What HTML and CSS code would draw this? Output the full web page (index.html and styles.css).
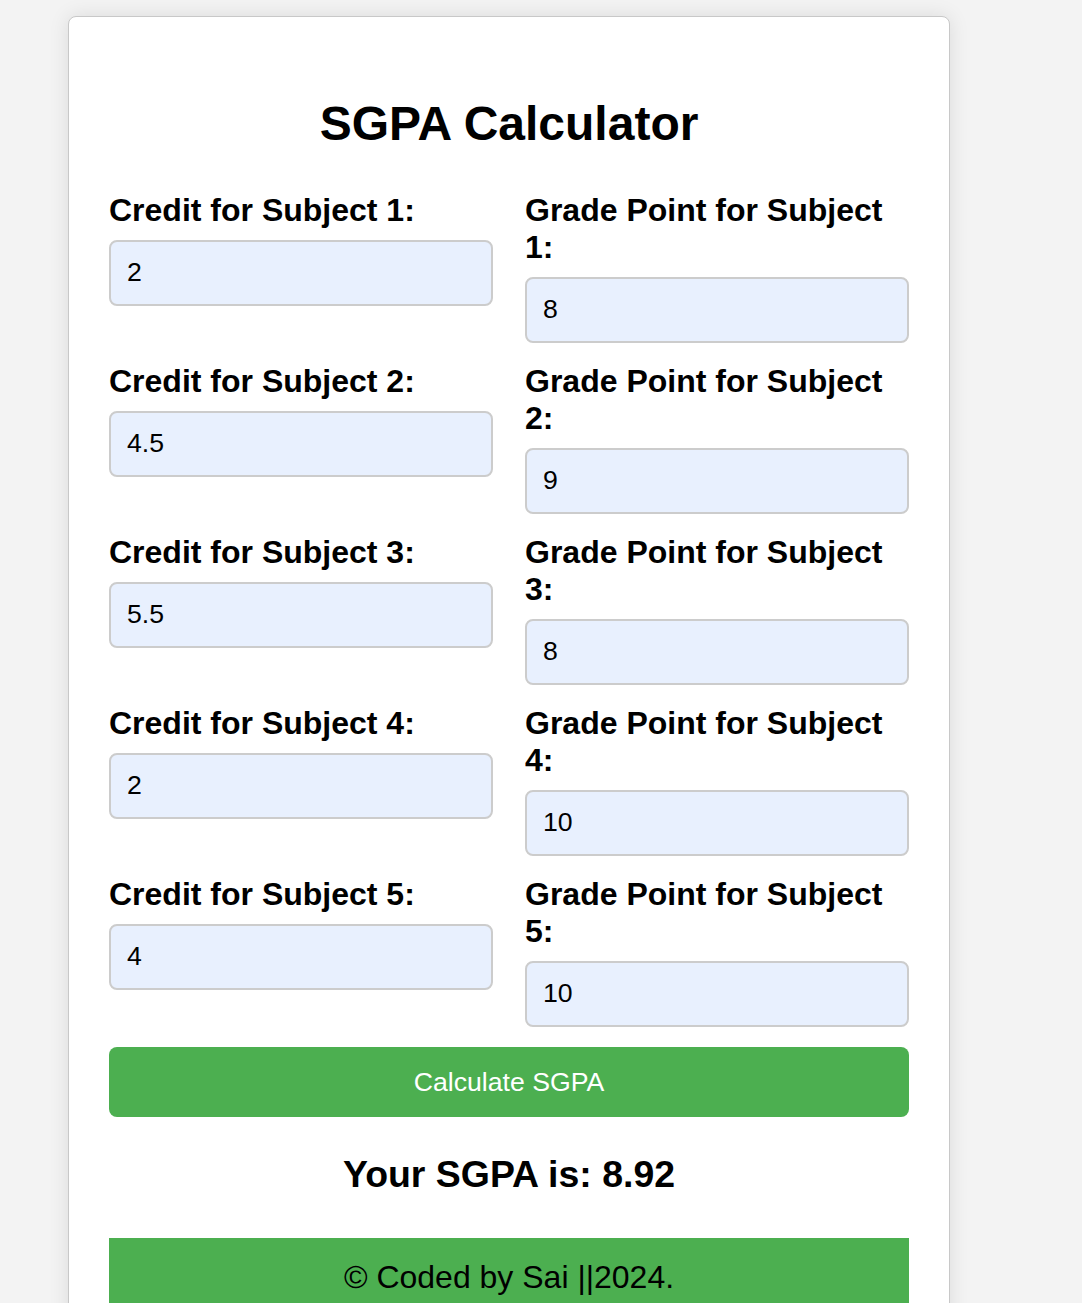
FILE: index.html
```html
<!DOCTYPE html>
<html lang="en">
<head>
<meta charset="utf-8">
<title>SGPA Calculator</title>
<link rel="stylesheet" href="styles.css">
</head>
<body>
<div class="card">
  <h1 class="title">SGPA Calculator</h1>
  <div class="grid">
    <div class="group"><label class="label">Credit for Subject 1:</label><input class="field" type="text" value="2"></div>
    <div class="group"><label class="label">Grade Point for Subject 1:</label><input class="field" type="text" value="8"></div>
    <div class="group"><label class="label">Credit for Subject 2:</label><input class="field" type="text" value="4.5"></div>
    <div class="group"><label class="label">Grade Point for Subject 2:</label><input class="field" type="text" value="9"></div>
    <div class="group"><label class="label">Credit for Subject 3:</label><input class="field" type="text" value="5.5"></div>
    <div class="group"><label class="label">Grade Point for Subject 3:</label><input class="field" type="text" value="8"></div>
    <div class="group"><label class="label">Credit for Subject 4:</label><input class="field" type="text" value="2"></div>
    <div class="group"><label class="label">Grade Point for Subject 4:</label><input class="field" type="text" value="10"></div>
    <div class="group"><label class="label">Credit for Subject 5:</label><input class="field" type="text" value="4"></div>
    <div class="group"><label class="label">Grade Point for Subject 5:</label><input class="field" type="text" value="10"></div>
  </div>
  <button class="calc" type="button">Calculate SGPA</button>
  <h3 class="result">Your SGPA is: 8.92</h3>
  <footer class="footer">© Coded by Sai ||2024.</footer>
</div>
</body>
</html>
```
FILE: styles.css
```css
html, body {
  margin: 0;
  padding: 0;
}
body {
  background: #f3f3f3;
  font-family: "Liberation Sans", Arial, sans-serif;
  color: #000;
}
.card {
  width: 800px;
  margin: 16px 0 0 68px;
  padding: 40px 40px 0;
  background: #fff;
  border: 1px solid #c8c8c8;
  border-radius: 8px;
  box-shadow: 0 0 20px rgba(0, 0, 0, 0.1);
  min-height: 1400px;
}
.title {
  margin: 39px 0 41px;
  font-size: 48px;
  font-weight: bold;
  text-align: center;
  line-height: 55px;
}
.grid {
  display: grid;
  grid-template-columns: 384px 384px;
  column-gap: 32px;
  align-items: start;
}
.group {
  display: flex;
  flex-direction: column;
  margin-bottom: 20px;
}
.label {
  display: block;
  font-size: 32px;
  font-weight: bold;
  line-height: 37px;
  margin-bottom: 11px;
}
.field {
  box-sizing: border-box;
  width: 100%;
  height: 66px;
  padding: 0 16px 2px;
  font-family: "Liberation Sans", Arial, sans-serif;
  font-size: 26.67px;
  color: #000;
  background: #e8f0fe;
  border: 2px solid #cccccc;
  border-radius: 8px;
  outline: none;
}
.calc {
  display: block;
  width: 100%;
  height: 70px;
  padding: 0;
  font-family: "Liberation Sans", Arial, sans-serif;
  font-size: 26.67px;
  color: #fff;
  background: #4caf50;
  border: none;
  border-radius: 8px;
}
.result {
  margin: 36px 0 42px;
  font-size: 37.44px;
  font-weight: bold;
  line-height: 43px;
  text-align: center;
}
.footer {
  padding: 21px 16px 16px;
  background: #4caf50;
  color: #000;
  font-size: 32px;
  line-height: 37px;
  text-align: center;
}
```
